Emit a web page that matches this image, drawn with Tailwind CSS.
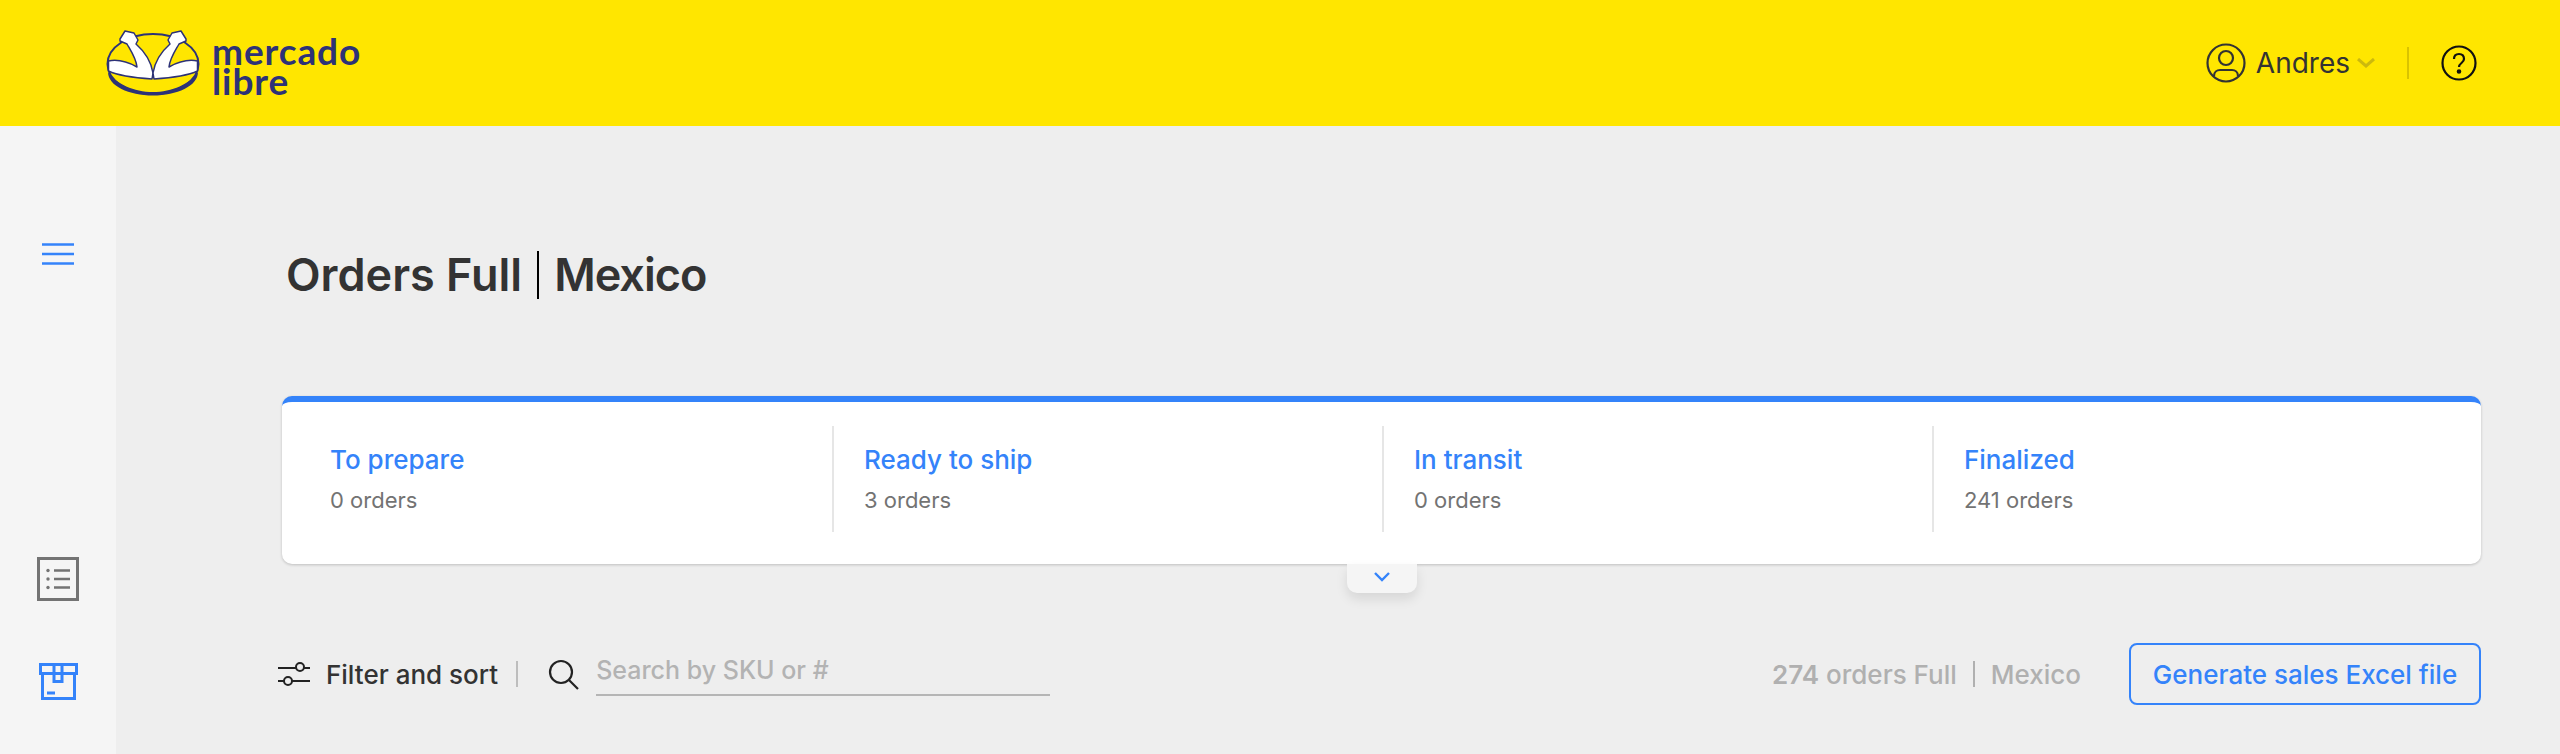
<!DOCTYPE html>
<html lang="en">
  <head>
    <meta charset="UTF-8" />
    <title>Orders Full | Mexico</title>
    <script src="https://cdn.jsdelivr.net/npm/@tailwindcss/browser@4"></script>
  </head>
  <body class="bg-[#eeeeee] h-[754px] overflow-hidden font-['Inter',sans-serif]">
    <!-- Header -->
    <header class="h-[126px] bg-[#ffe600] flex items-center justify-between pl-[105px] pr-[83px]">
      <div class="flex items-center">
        <svg class="w-[98px] h-[66px]" viewBox="0 0 98 66" fill="none">
          <ellipse cx="48" cy="34" rx="45.5" ry="30" fill="#ffe600" stroke="#2d3277" stroke-width="2" />
          <path d="M3 42c8 12 26 20 45 20s37-8 45-20c0 14-21 23.500-45 23.500S3 56 3 42z" fill="#2d3277" />
          <g fill="#fff" stroke="#2d3277" stroke-width="1.500" stroke-linejoin="round">
            <path d="M3.500 31C13 29 23 32 32 37 31 28 26 21 22 14l-7-3 0-2 5-8 9 2 4 7-2 4c8 7 15 17 17 29l-1 6C32 48 14 46 3.500 41z" />
          </g>
          <g fill="#fff" stroke="#2d3277" stroke-width="1.500" stroke-linejoin="round" transform="matrix(-1 0 0 1 96 0)">
            <path d="M3.500 31C13 29 23 32 32 37 31 28 26 21 22 14l-7-3 0-2 5-8 9 2 4 7-2 4c8 7 15 17 17 29l-1 6C32 48 14 46 3.500 41z" />
          </g>
        </svg>
        <div class="ml-[9px] pt-[6px] font-['Lato',sans-serif] font-bold text-[#2d3277] text-[37px] leading-[30px] tracking-[0.9px]">
          mercado<br />libre
        </div>
      </div>
      <div class="flex items-center">
        <svg class="w-[40px] h-[40px]" viewBox="0 0 40 40" fill="none" stroke="#333" stroke-width="2.200">
          <circle cx="20" cy="20" r="18.500" />
          <circle cx="20" cy="15" r="7" />
          <path d="M8 33c0-4 3-6 6-6h12c3 0 6 2 6 6" />
        </svg>
        <span class="ml-[10px] text-[28px] text-[#333333]">Andres</span>
        <svg class="ml-[7px] w-[18px] h-[10px]" viewBox="0 0 18 10" fill="none" stroke="#333" stroke-opacity="0.25" stroke-width="3">
          <path d="M1 1l8 7 8-7" />
        </svg>
        <div class="ml-[32px] w-[2px] h-[32px] bg-black/15"></div>
        <svg class="ml-[32px] w-[36px] h-[36px]" viewBox="0 0 36 36" fill="none" stroke="#111" stroke-width="2.200">
          <circle cx="18" cy="18" r="16.500" />
          <path d="M13 14c0-3 2-5 5-5s5 2 5 5c0 4-5 4-5 8" />
          <circle cx="18" cy="26.500" r="1.200" fill="#111" />
        </svg>
      </div>
    </header>

    <div class="flex h-[628px]">
      <!-- Sidebar -->
      <aside class="w-[116px] shrink-0 bg-[#f5f5f5] flex flex-col items-center pt-[117px]">
        <svg class="w-[32px] h-[22px] mr-[1px]" viewBox="0 0 32 22" fill="none" stroke="#3483fa" stroke-width="2.500">
          <path d="M0 1.500h32M0 11h32M0 20.500h32" />
        </svg>
        <svg class="mt-[292px] w-[42px] h-[44px]" viewBox="0 0 42 44" fill="none" stroke="#737373" stroke-width="2.500">
          <rect x="1.500" y="1.500" width="39" height="41" stroke-width="3" />
          <path d="M17 13.500h16M17 22h16M17 30.500h16" />
          <circle cx="11" cy="13.500" r="1.700" fill="#737373" stroke="none" />
          <circle cx="11" cy="22" r="1.700" fill="#737373" stroke="none" />
          <circle cx="11" cy="30.500" r="1.700" fill="#737373" stroke="none" />
        </svg>
        <svg class="mt-[62px] w-[39px] h-[37px]" viewBox="0 0 39 37" fill="none" stroke="#3483fa" stroke-width="3">
          <path d="M1.500 1.500h36v9h-36zM3.500 11v24.500h32V11" />
          <path d="M15 1.500v17h8v-17" />
          <path d="M8 30h8" />
        </svg>
      </aside>

      <!-- Main -->
      <main class="flex-1 pl-[166px] pr-[79px]">
        <h1 class="mt-[117px] pl-[4px] h-[64px] flex items-center text-[45px] font-[580] text-[#333333]">
          <span>Orders Full</span>
          <span class="mx-[15px] w-[2px] h-[48px] bg-black"></span>
          <span class="tracking-[-1px]">Mexico</span>
        </h1>

        <!-- Status card -->
        <section class="relative mt-[89px] h-[168px] bg-white rounded-[10px] border-t-[6px] border-[#3483fa] shadow-[0_1px_3px_rgba(0,0,0,0.2)] flex items-start pt-[24px]">
          <div class="w-[552px] h-[106px] border-r-2 border-[#e6e6e6] pl-[48px] pt-[18px]">
            <p class="text-[26px] font-medium leading-[32px] text-[#3483fa]">To prepare</p>
            <p class="mt-[9px] text-[22px] leading-[30px] text-[#737373]">0 orders</p>
          </div>
          <div class="w-[550px] h-[106px] border-r-2 border-[#e6e6e6] pl-[30px] pt-[18px]">
            <p class="text-[26px] font-medium leading-[32px] text-[#3483fa]">Ready to ship</p>
            <p class="mt-[9px] text-[22px] leading-[30px] text-[#737373]">3 orders</p>
          </div>
          <div class="w-[550px] h-[106px] border-r-2 border-[#e6e6e6] pl-[30px] pt-[18px]">
            <p class="text-[26px] font-medium leading-[32px] text-[#3483fa]">In transit</p>
            <p class="mt-[9px] text-[22px] leading-[30px] text-[#737373]">0 orders</p>
          </div>
          <div class="flex-1 h-[106px] pl-[30px] pt-[18px]">
            <p class="text-[26px] font-medium leading-[32px] text-[#3483fa]">Finalized</p>
            <p class="mt-[9px] text-[22px] leading-[30px] text-[#737373]">241 orders</p>
          </div>
          <button class="absolute left-1/2 -translate-x-1/2 top-[162px] w-[70px] h-[29px] bg-[#f5f5f5] rounded-b-[10px] shadow-[0_6px_12px_rgba(0,0,0,0.1)] flex justify-center pt-[8px]">
            <svg class="w-[16px] h-[10px]" viewBox="0 0 16 10" fill="none" stroke="#3483fa" stroke-width="2.400">
              <path d="M1 1l7 7 7-7" />
            </svg>
          </button>
        </section>

        <!-- Toolbar -->
        <div class="mt-[79px] h-[62px] flex items-center justify-between">
          <div class="flex items-center">
            <svg class="w-[32px] h-[26px] ml-[-4px]" viewBox="0 0 32 26" fill="none" stroke="#222" stroke-width="2">
              <path d="M0 7h18M26 7h6M0 20h6M14 20h18" />
              <circle cx="22" cy="6" r="4" />
              <circle cx="10" cy="20" r="4" />
            </svg>
            <span class="ml-[16px] text-[26px] font-medium text-[#333333]">Filter and sort</span>
            <span class="ml-[18px] w-[2px] h-[26px] bg-[#bdbdbd]"></span>
            <svg class="ml-[30px] w-[31px] h-[31px]" viewBox="0 0 31 31" fill="none" stroke="#222" stroke-width="2.200">
              <circle cx="13" cy="13" r="11" />
              <path d="M21 21l9 9" />
            </svg>
            <div class="ml-[17px] w-[454px] h-[44px] border-b-2 border-[#b5b5b5] text-[25px] font-medium leading-[36px] text-[#b3b3b3]">Search by SKU or #</div>
          </div>
          <div class="flex items-center">
            <span class="text-[26px] font-medium text-[#b0b0b0]"><b class="font-semibold">274</b> orders Full</span>
            <span class="mx-[16px] w-[2px] h-[26px] bg-[#b0b0b0]"></span>
            <span class="text-[26px] font-medium text-[#b0b0b0]">Mexico</span>
            <button class="ml-[48px] w-[352px] h-[62px] rounded-[8px] border-2 border-[#3483fa] text-[26px] font-medium text-[#3483fa]">Generate sales Excel file</button>
          </div>
        </div>
      </main>
    </div>
  </body>
</html>
